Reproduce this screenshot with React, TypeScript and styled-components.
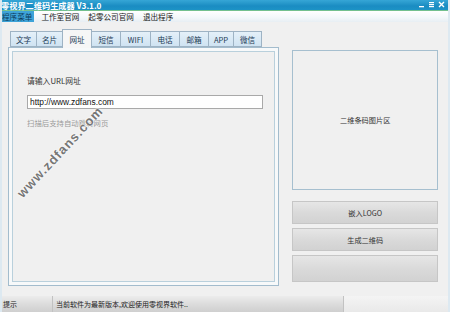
import React from 'react'
import styled, { createGlobalStyle } from 'styled-components'

const Global = createGlobalStyle`
html, body {
  margin: 0;
  padding: 0;
  width: 450px;
  height: 312px;
  overflow: hidden;
  background: #f0f0f0;
}
* { box-sizing: border-box; }
`
const cjk = `"Noto Sans CJK SC", "Liberation Sans", sans-serif`

const Window = styled.div`
position: relative;
display: flex;
flex-direction: column;
width: 450px;
height: 312px;
background: #f0f0f0;
font-family: ${cjk};
color: #222;
border-left: 2px solid #dde9f1;
border-right: 2px solid #dde9f1;
overflow: hidden;
`
const TitleBar = styled.div`
display: flex;
align-items: flex-start;
justify-content: space-between;
height: 11px;
margin: 0 -2px;
background: linear-gradient(to bottom, #36a6d6 0%, #1a8cc2 60%, #1c93c6 100%);
border-bottom: 1px solid #74c08e;
`
const Title = styled.div`
padding-left: 1px;
font-size: 8.2px;
line-height: 10px;
font-weight: bold;
color: #fff;
white-space: nowrap;
`
const Controls = styled.div`
display: flex;
gap: 3px;
padding: 1px 5px 0 0;
`
const MenuBar = styled.div`
display: flex;
align-items: center;
gap: 5px;
height: 14px;
margin: 0 -2px;
background: linear-gradient(to bottom, #ffffff 0%, #f3f7fa 60%, #e7eef3 100%);
`
const MenuItem = styled.div<{ $active?: boolean }>`
font-size: 7.6px;
line-height: 11px;
padding: 0 2px;
color: ${p => (p.$active ? '#0c3b5c' : '#222')};
background: ${p => (p.$active ? '#3ea3d8' : 'transparent')};
white-space: nowrap;
`
const Main = styled.div`
flex: 1;
display: flex;
gap: 13px;
padding: 6px 10px 10px 6px;
`
const LeftCol = styled.div`
width: 272px;
display: flex;
flex-direction: column;
`
const Tabs = styled.div`
display: flex;
align-items: flex-end;
height: 19px;
padding-left: 3px;
`
const Tab = styled.div<{ $active?: boolean; $w: number }>`
width: ${p => p.$w}px;
height: ${p => (p.$active ? 19 : 16)}px;
margin-bottom: ${p => (p.$active ? -1 : 0)}px;
display: flex;
align-items: center;
justify-content: center;
font-size: 7.6px;
color: #1d3b55;
background: ${p => (p.$active ? '#f6f6f6' : 'linear-gradient(to bottom, #e4f0f9, #cfe3f2)')};
border: 1px solid #9eb3c4;
border-bottom: ${p => (p.$active ? 'none' : '1px solid #9eb3c4')};
margin-left: -1px;
position: relative;
z-index: ${p => (p.$active ? 2 : 1)};
`
const Panel = styled.div`
flex: 1;
border: 1px solid #a3bccd;
padding: 3px;
background: #f7f9fa;
`
const PanelInner = styled.div`
height: 100%;
border: 1px solid #b9d0dc;
background: #f0f0f0;
display: flex;
flex-direction: column;
padding: 24px 0 0 14px;
`
const Label = styled.div`
font-size: 7.8px;
line-height: 10px;
color: #333;
`
const Input = styled.div`
margin-top: 9px;
width: 236px;
height: 14px;
border: 1px solid #a9a9a9;
background: #fff;
font-family: "Liberation Sans", sans-serif;
font-size: 8.4px;
line-height: 12px;
padding-left: 2px;
color: #111;
`
const Hint = styled.div`
margin-top: 9px;
font-size: 7.4px;
line-height: 10px;
color: #9a9a9a;
`
const RightCol = styled.div`
width: 146px;
display: flex;
flex-direction: column;
padding-top: 22px;
`
const QrBox = styled.div`
height: 140px;
border: 1px solid #a6bfcf;
background: #f0f0f0;
display: flex;
align-items: center;
justify-content: center;
font-size: 7.2px;
color: #333;
margin-bottom: 11px;
`
const Button = styled.div<{ $h: number }>`
height: ${p => p.$h}px;
margin-bottom: 4px;
display: flex;
align-items: center;
justify-content: center;
font-size: 7.2px;
color: #333;
border: 1px solid #c6c6c6;
background: linear-gradient(to bottom, #e6e6e6 0%, #dadada 50%, #d2d2d2 100%);
`
const StatusBar = styled.div`
display: flex;
height: 21px;
margin: 0 -2px;
background: linear-gradient(to bottom, #ececec 0%, #dcdcdc 50%, #cfcfcf 100%);
font-size: 7px;
color: #222;
`
const StatusCell = styled.div<{ $w?: number; $light?: boolean }>`
width: ${p => (p.$w ? `${p.$w}px` : 'auto')};
flex: ${p => (p.$w ? 'none' : 1)};
display: flex;
align-items: center;
padding-left: ${p => (p.$light ? 0 : 3)}px;
border-right: 1px solid #c2c2c2;
background: ${p => (p.$light ? 'linear-gradient(to bottom, #f4f4f4, #e9e9e9)' : 'transparent')};
`
const Watermark = styled.div`
position: absolute;
left: 58px;
top: 152px;
transform: translate(-50%, -50%) rotate(-47deg);
font-family: "Liberation Sans", sans-serif;
font-weight: bold;
font-size: 13px;
letter-spacing: 1px;
color: #767676;
text-shadow: 0 0 2px #fff, 0 0 2px #fff;
white-space: nowrap;
pointer-events: none;
`

const tabs = [
  { t: '文字', w: 27 },
  { t: '名片', w: 27 },
  { t: '网址', w: 30 },
  { t: '短信', w: 30 },
  { t: 'WIFI', w: 31 },
  { t: '电话', w: 30 },
  { t: '邮箱', w: 30 },
  { t: 'APP', w: 26 },
  { t: '微信', w: 29 },
]

const App = () => {
  return (
    <Window>
      <Global />
      <TitleBar>
        <Title>零视界二维码生成器 V3.1.0</Title>
        <Controls>
          <svg width="7" height="7" viewBox="0 0 7 7"><rect x="1" y="5" width="5" height="1.3" fill="#fff" /></svg>
          <svg width="7" height="7" viewBox="0 0 7 7"><rect x="1" y="1" width="5" height="1.2" fill="#fff" /><rect x="1" y="3" width="5" height="1.2" fill="#fff" /><rect x="1" y="5" width="5" height="1.2" fill="#fff" /></svg>
          <svg width="7" height="7" viewBox="0 0 7 7"><path d="M1 1 L6 6 M6 1 L1 6" stroke="#fff" strokeWidth="1.4" /></svg>
        </Controls>
      </TitleBar>
      <MenuBar>
        <MenuItem $active>程序菜单</MenuItem>
        <MenuItem>工作室官网</MenuItem>
        <MenuItem>起零公司官网</MenuItem>
        <MenuItem>退出程序</MenuItem>
      </MenuBar>
      <Main>
        <LeftCol>
          <Tabs>
            {tabs.map(tab => (
              <Tab key={tab.t} $w={tab.w} $active={tab.t === '网址'}>{tab.t}</Tab>
            ))}
          </Tabs>
          <Panel>
            <PanelInner>
              <Label>请输入URL网址</Label>
              <Input>http://www.zdfans.com</Input>
              <Hint>扫描后支持自动跳转网页</Hint>
            </PanelInner>
          </Panel>
        </LeftCol>
        <RightCol>
          <QrBox>二维条码图片区</QrBox>
          <Button $h={23}>嵌入LOGO</Button>
          <Button $h={23}>生成二维码</Button>
          <Button $h={27}></Button>
        </RightCol>
      </Main>
      <StatusBar>
        <StatusCell $w={53}>提示</StatusCell>
        <StatusCell>当前软件为最新版本,欢迎使用零视界软件..</StatusCell>
        <StatusCell $w={106} $light />
      </StatusBar>
      <Watermark>www.zdfans.com</Watermark>
    </Window>
  )
}
export default App
